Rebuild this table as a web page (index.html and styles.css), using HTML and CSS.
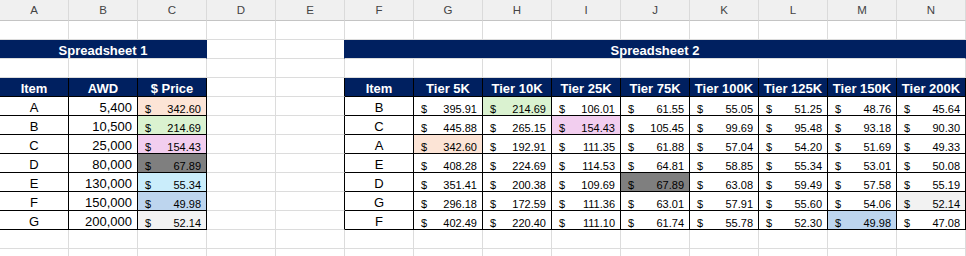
FILE: index.html
```html
<!DOCTYPE html>
<html>
<head>
<meta charset="utf-8">
<link rel="stylesheet" href="styles.css">
</head>
<body>
<div class="sheet">
  <div class="ch">A</div><div class="ch">B</div><div class="ch">C</div><div class="ch">D</div><div class="ch">E</div><div class="ch">F</div><div class="ch">G</div><div class="ch">H</div><div class="ch">I</div><div class="ch">J</div><div class="ch">K</div><div class="ch">L</div><div class="ch">M</div><div class="ch">N</div>

  <div class="c"></div><div class="c"></div><div class="c"></div><div class="c"></div><div class="c"></div><div class="c"></div><div class="c"></div><div class="c"></div><div class="c"></div><div class="c"></div><div class="c"></div><div class="c"></div><div class="c"></div><div class="c"></div>

  <div class="c title t1">Spreadsheet 1</div><div class="c"></div><div class="c edge-navy"></div><div class="c title t2">Spreadsheet 2</div>

  <div class="c"></div><div class="c"></div><div class="c"></div><div class="c"></div><div class="c"></div><div class="c"></div><div class="c"></div><div class="c"></div><div class="c"></div><div class="c"></div><div class="c"></div><div class="c"></div><div class="c"></div><div class="c"></div>

  <div class="c th">Item</div><div class="c th">AWD</div><div class="c th">$ Price</div><div class="c"></div><div class="c edge"></div>
  <div class="c th">Item</div><div class="c th">Tier 5K</div><div class="c th">Tier 10K</div><div class="c th">Tier 25K</div><div class="c th">Tier 75K</div><div class="c th">Tier 100K</div><div class="c th">Tier 125K</div><div class="c th">Tier 150K</div><div class="c th">Tier 200K</div>

  <div class="c item">A</div><div class="c num">5,400</div><div class="c cur f-peach"><span>$</span><span>342.60</span></div><div class="c"></div><div class="c edge"></div>
  <div class="c item">B</div><div class="c cur"><span>$</span><span>395.91</span></div><div class="c cur f-green"><span>$</span><span>214.69</span></div><div class="c cur"><span>$</span><span>106.01</span></div><div class="c cur"><span>$</span><span>61.55</span></div><div class="c cur"><span>$</span><span>55.05</span></div><div class="c cur"><span>$</span><span>51.25</span></div><div class="c cur"><span>$</span><span>48.76</span></div><div class="c cur"><span>$</span><span>45.64</span></div>

  <div class="c item">B</div><div class="c num">10,500</div><div class="c cur f-green"><span>$</span><span>214.69</span></div><div class="c"></div><div class="c edge"></div>
  <div class="c item">C</div><div class="c cur"><span>$</span><span>445.88</span></div><div class="c cur"><span>$</span><span>265.15</span></div><div class="c cur f-pink"><span>$</span><span>154.43</span></div><div class="c cur"><span>$</span><span>105.45</span></div><div class="c cur"><span>$</span><span>99.69</span></div><div class="c cur"><span>$</span><span>95.48</span></div><div class="c cur"><span>$</span><span>93.18</span></div><div class="c cur"><span>$</span><span>90.30</span></div>

  <div class="c item">C</div><div class="c num">25,000</div><div class="c cur f-pink"><span>$</span><span>154.43</span></div><div class="c"></div><div class="c edge"></div>
  <div class="c item">A</div><div class="c cur f-peach"><span>$</span><span>342.60</span></div><div class="c cur"><span>$</span><span>192.91</span></div><div class="c cur"><span>$</span><span>111.35</span></div><div class="c cur"><span>$</span><span>61.88</span></div><div class="c cur"><span>$</span><span>57.04</span></div><div class="c cur"><span>$</span><span>54.20</span></div><div class="c cur"><span>$</span><span>51.69</span></div><div class="c cur"><span>$</span><span>49.33</span></div>

  <div class="c item">D</div><div class="c num">80,000</div><div class="c cur f-gray"><span>$</span><span>67.89</span></div><div class="c"></div><div class="c edge"></div>
  <div class="c item">E</div><div class="c cur"><span>$</span><span>408.28</span></div><div class="c cur"><span>$</span><span>224.69</span></div><div class="c cur"><span>$</span><span>114.53</span></div><div class="c cur"><span>$</span><span>64.81</span></div><div class="c cur"><span>$</span><span>58.85</span></div><div class="c cur"><span>$</span><span>55.34</span></div><div class="c cur"><span>$</span><span>53.01</span></div><div class="c cur"><span>$</span><span>50.08</span></div>

  <div class="c item">E</div><div class="c num">130,000</div><div class="c cur f-sky"><span>$</span><span>55.34</span></div><div class="c"></div><div class="c edge"></div>
  <div class="c item">D</div><div class="c cur"><span>$</span><span>351.41</span></div><div class="c cur"><span>$</span><span>200.38</span></div><div class="c cur"><span>$</span><span>109.69</span></div><div class="c cur f-gray"><span>$</span><span>67.89</span></div><div class="c cur"><span>$</span><span>63.08</span></div><div class="c cur"><span>$</span><span>59.49</span></div><div class="c cur"><span>$</span><span>57.58</span></div><div class="c cur"><span>$</span><span>55.19</span></div>

  <div class="c item">F</div><div class="c num">150,000</div><div class="c cur f-blue"><span>$</span><span>49.98</span></div><div class="c"></div><div class="c edge"></div>
  <div class="c item">G</div><div class="c cur"><span>$</span><span>296.18</span></div><div class="c cur"><span>$</span><span>172.59</span></div><div class="c cur"><span>$</span><span>111.36</span></div><div class="c cur"><span>$</span><span>63.01</span></div><div class="c cur"><span>$</span><span>57.91</span></div><div class="c cur"><span>$</span><span>55.60</span></div><div class="c cur"><span>$</span><span>54.06</span></div><div class="c cur f-light"><span>$</span><span>52.14</span></div>

  <div class="c item">G</div><div class="c num">200,000</div><div class="c cur f-light"><span>$</span><span>52.14</span></div><div class="c"></div><div class="c edge"></div>
  <div class="c item">F</div><div class="c cur"><span>$</span><span>402.49</span></div><div class="c cur"><span>$</span><span>220.40</span></div><div class="c cur"><span>$</span><span>111.10</span></div><div class="c cur"><span>$</span><span>61.74</span></div><div class="c cur"><span>$</span><span>55.78</span></div><div class="c cur"><span>$</span><span>52.30</span></div><div class="c cur f-blue"><span>$</span><span>49.98</span></div><div class="c cur"><span>$</span><span>47.08</span></div>

  <div class="c"></div><div class="c"></div><div class="c"></div><div class="c"></div><div class="c"></div><div class="c"></div><div class="c"></div><div class="c"></div><div class="c"></div><div class="c"></div><div class="c"></div><div class="c"></div><div class="c"></div><div class="c"></div>

  <div class="c"></div><div class="c"></div><div class="c"></div><div class="c"></div><div class="c"></div><div class="c"></div><div class="c"></div><div class="c"></div><div class="c"></div><div class="c"></div><div class="c"></div><div class="c"></div><div class="c"></div><div class="c"></div>
</div>
</body>
</html>
```
FILE: styles.css
```css
html, body {
  margin: 0;
  padding: 0;
  background: #ffffff;
  overflow: hidden;
}

.sheet {
  display: grid;
  grid-template-columns: repeat(14, 69px);
  grid-template-rows: 21px;
  grid-auto-rows: 19px;
  font-family: "Liberation Sans", Arial, sans-serif;
  color: #000;
}

.sheet > div {
  box-sizing: border-box;
  overflow: hidden;
  white-space: nowrap;
}

.ch {
  background: #f0f0f0;
  border-right: 1px solid #dadada;
  border-bottom: 1px solid #c4c4c4;
  color: #444444;
  font-size: 11.5px;
  line-height: 12px;
  padding-top: 4px;
  text-align: center;
}

.c {
  border-right: 1px solid #dcdcdc;
  border-bottom: 1px solid #dcdcdc;
  font-size: 13px;
  line-height: 14px;
  padding-top: 4px;
}

.title {
  background: #002060;
  color: #ffffff;
  font-weight: bold;
  text-align: center;
  border-right-color: #002060;
}

.t1 { grid-column: span 3; }
.t2 { grid-column: span 9; }

.edge-navy { border-right-color: #002060; }

.th {
  background: #002060;
  color: #ffffff;
  font-weight: bold;
  text-align: center;
  border-right-color: #000;
  border-bottom-color: #000;
}

.edge { border-right-color: #000; }

.item {
  text-align: center;
  border-right-color: #000;
  border-bottom-color: #000;
}

.num {
  text-align: right;
  padding-right: 5px;
  border-right-color: #000;
  border-bottom-color: #000;
}

.cur {
  display: flex;
  justify-content: space-between;
  font-size: 11px;
  line-height: 12px;
  padding: 5.5px 5px 0 7px;
  border-right-color: #000;
  border-bottom-color: #000;
}

.f-peach { background: #fce4d6; }
.f-green { background: #daf2d0; }
.f-pink { background: #f2ceef; }
.f-gray { background: #7f7f7f; }
.f-sky { background: #caedfb; }
.f-blue { background: #bdd5ee; }
.f-light { background: #f2f2f2; }
```
